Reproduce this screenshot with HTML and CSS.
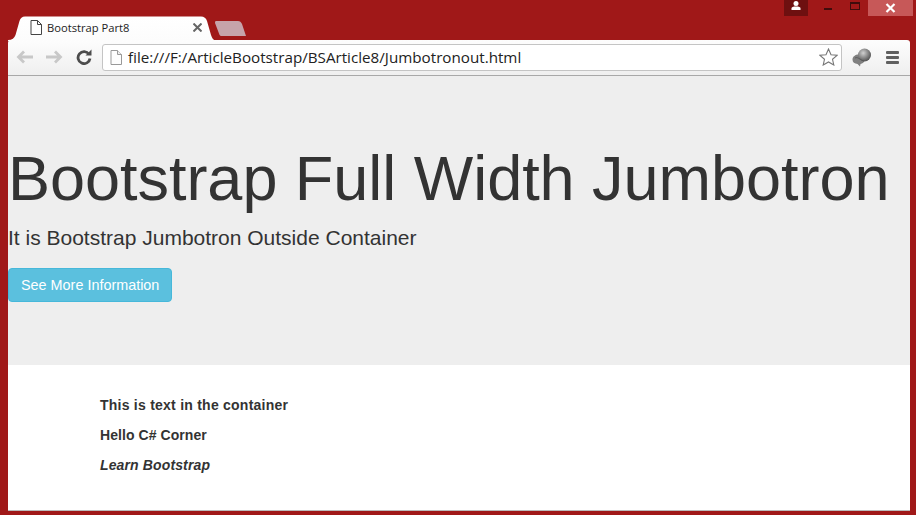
FILE: index.html
```html
<!DOCTYPE html>
<html lang="en">
<head>
<meta charset="utf-8">
<title>Bootstrap Part8</title>
<link rel="stylesheet" href="styles.css">
</head>
<body>
<div class="window">
  <header class="titlebar">
    <div class="tabstrip">
      <div class="tab">
        <svg class="tab-shape" width="208" height="25" viewBox="0 0 208 25"><defs><linearGradient id="tg" x1="0" y1="0" x2="0" y2="1"><stop offset="0" stop-color="#ffffff"/><stop offset="1" stop-color="#fcfcfc"/></linearGradient></defs><path d="M0 25V24C4 24 6.500 22 7.500 19L11.500 5C12.500 2 14 .5 17 .5H193C196 .5 198 2 199 5L203 19C204 22 205 24 208 25Z" fill="url(#tg)"/></svg>
        <svg class="file-icon" width="12" height="15" viewBox="0 0 12 15"><path d="M1 .5H7.500L11.500 4.500V14.500H1Z" fill="#fff" stroke="#444"/><path d="M7.500 .5V4.500H11.500" fill="none" stroke="#444"/></svg>
        <span class="tab-title">Bootstrap Part8</span>
        <svg class="tab-close" width="9" height="9" viewBox="0 0 9 9"><path d="M.5 .5L8.500 8.500M8.500 .5L.5 8.500" stroke="#666" stroke-width="2"/></svg>
      </div>
      <svg class="newtab" width="32" height="15" viewBox="0 0 32 15"><path d="M1 0H23C25 0 26 1 27 3L31 15H6C5 15 4.500 14 4 12.500L0 2C0 1 0 0 1 0Z" fill="#c6a3aa"/></svg>
    </div>
    <div class="controls">
      <div class="profile"><svg width="12" height="9" viewBox="0 0 12 9"><circle cx="6" cy="2.500" r="2.500" fill="#fff"/><path d="M1.500 9V7.500C1.500 6 3 5.500 6 5.500S10.500 6 10.500 7.500V9Z" fill="#fff"/></svg></div>
      <div class="minimize"><span class="min-bar"></span></div>
      <div class="maximize"><span class="max-box"></span></div>
      <div class="close"><svg width="11" height="10" viewBox="0 0 11 10"><path d="M1.500 1L9.500 9M9.500 1L1.500 9" stroke="#fff" stroke-width="2.200"/></svg></div>
    </div>
  </header>
  <nav class="toolbar">
    <svg class="nav-icon arrow" width="18" height="14" viewBox="0 0 18 14"><path d="M8 1.500L2.500 7L8 12.500M3 7H17" fill="none" stroke="#c8c8c8" stroke-width="2.800"/></svg>
    <svg class="nav-icon arrow fwd" width="18" height="14" viewBox="0 0 18 14"><path d="M10 1.500L15.500 7L10 12.500M15 7H1" fill="none" stroke="#c8c8c8" stroke-width="2.800"/></svg>
    <svg class="nav-icon reload" width="16" height="16" viewBox="0 0 16 16"><path d="M13 5.200A6 6 0 1 0 14 9.500" fill="none" stroke="#4c4c4c" stroke-width="2.800"/><path d="M9.500 6.500H15.500V.5Z" fill="#4c4c4c"/></svg>
    <div class="omnibox">
      <svg class="file-icon url-icon" width="12" height="15" viewBox="0 0 12 15"><path d="M1 .5H7.500L11.500 4.500V14.500H1Z" fill="#fdfdfd" stroke="#999"/><path d="M7.500 .5V4.500H11.500" fill="#eee" stroke="#999"/></svg>
      <span class="url">file:///F:/ArticleBootstrap/BSArticle8/Jumbotronout.html</span>
      <svg class="star" width="19" height="18" viewBox="0 0 19 18"><path d="M9.500 1L12 6.700L18 7.300L13.500 11.300L14.800 17L9.500 14L4.200 17L5.500 11.300L1 7.300L7 6.700Z" fill="#fff" stroke="#777" stroke-width="1.100"/></svg>
    </div>
    <svg class="ext" width="20" height="19" viewBox="0 0 20 19"><defs><radialGradient id="eg" cx=".4" cy=".35" r=".7"><stop offset="0" stop-color="#d0d0d0"/><stop offset="1" stop-color="#4a4a4a"/></radialGradient></defs><path d="M.5 11.500C.5 8.500 3.500 6.500 6.500 6.500S12.500 8.500 12.500 11.500 10.500 15.500 8.500 16L8 18.500 5.500 16C2.500 15.500 .5 14.500 .5 11.500Z" fill="#808080"/><circle cx="12.500" cy="7" r="6.500" fill="url(#eg)"/><path d="M3 10C6 8.500 8 12 12 13" fill="none" stroke="#555" stroke-width=".8"/></svg>
    <div class="menu"><span></span><span></span><span></span></div>
  </nav>
  <main class="page">
    <section class="jumbotron">
      <h1>Bootstrap Full Width Jumbotron</h1>
      <p class="lead">It is Bootstrap Jumbotron Outside Container</p>
      <a class="btn">See More Information</a>
    </section>
    <section class="container">
      <p class="strong first">This is text in the container</p>
      <p class="strong second">Hello C# Corner</p>
      <p class="strong third">Learn Bootstrap</p>
    </section>
  </main>
</div>
</body>
</html>
```
FILE: styles.css
```css
* { box-sizing: border-box; }
html, body { margin: 0; height: 100%; }
body { overflow: hidden; background: #a01818; font-family: "Liberation Sans", Arial, sans-serif; }
.window { width: 916px; height: 515px; display: flex; flex-direction: column; padding: 0 6px 4px 8px; background: #a01818; }
.titlebar { height: 40px; flex: none; display: flex; justify-content: space-between; margin-right: -6px; }
.tabstrip { display: flex; align-items: flex-end; }
.tab { position: relative; width: 208px; height: 25px; margin-bottom: -1px; display: flex; align-items: center; padding: 0 0 3px 22px; }
.tab-shape { position: absolute; left: 0; top: 0; }
.tab > :not(.tab-shape) { position: relative; }
.tab-title { font: 11.200px "Open Sans", sans-serif; color: #222; margin-left: 5px; width: 146px; white-space: nowrap; }
.newtab { margin: 0 0 4px -1px; }
.controls { display: flex; align-items: flex-start; }
.profile { width: 24px; height: 16px; background: #6e1010; display: flex; justify-content: center; padding-top: 1px; }
.minimize { width: 42px; height: 16px; padding: 8px 0 0 16px; }
.min-bar { display: block; width: 8px; height: 2px; background: #3f0c0c; }
.maximize { width: 18px; height: 16px; padding-top: 2px; }
.max-box { display: block; width: 10px; height: 8px; border: 1px solid #3f0c0c; border-top-width: 2px; }
.close { width: 45px; height: 16px; background: #c75858; margin-right: 3px; display: flex; align-items: center; justify-content: center; }
.toolbar { height: 36px; flex: none; display: flex; align-items: center; padding: 0 9px 1px 8px; background: linear-gradient(#fdfdfd, #efefef); border-bottom: 1px solid #a8a8a8; border-radius: 3px 3px 0 0; }
.nav-icon { flex: none; }
.arrow { margin-bottom: 1px; }
.fwd { margin-left: 11px; }
.reload { margin-left: 13px; }
.omnibox { width: 740px; height: 27px; margin-left: 10px; flex: none; display: flex; align-items: center; padding: 0 3px 0 7px; background: #fff; border: 1px solid #c4c4c4; border-radius: 3px; }
.url-icon { flex: none; }
.url { font: 15.200px "Open Sans", sans-serif; color: #222; margin-left: 6px; flex: 1; white-space: nowrap; }
.star { flex: none; }
.ext { margin-left: 10px; flex: none; }
.menu { margin-left: 14px; width: 13px; display: flex; flex-direction: column; gap: 2px; }
.menu span { height: 3px; background: #606060; border-radius: 1px; }
.page { flex: 1; background: #fff; border-bottom: 1px solid #bbb; color: #333; }
.jumbotron { height: 289px; background: #eee; padding-top: 68px; }
h1 { margin: 0; font-size: 63px; font-weight: 500; line-height: 69px; letter-spacing: -.03px; }
.lead { margin: 10px 0 0; font-size: 21px; line-height: 30px; }
.btn { display: inline-block; margin-top: 15px; height: 34px; padding: 0 12px; background: #5bc0de; border: 1px solid #46b8da; border-radius: 4px; color: #fff; font-size: 14.400px; line-height: 32px; }
.container { padding: 30px 0 0 92px; }
.strong { margin: 0 0 10px; font-size: 14px; line-height: 20px; font-weight: bold; }
.first { letter-spacing: .24px; }
.second { letter-spacing: .07px; }
.third { letter-spacing: .13px; font-style: italic; }
```
